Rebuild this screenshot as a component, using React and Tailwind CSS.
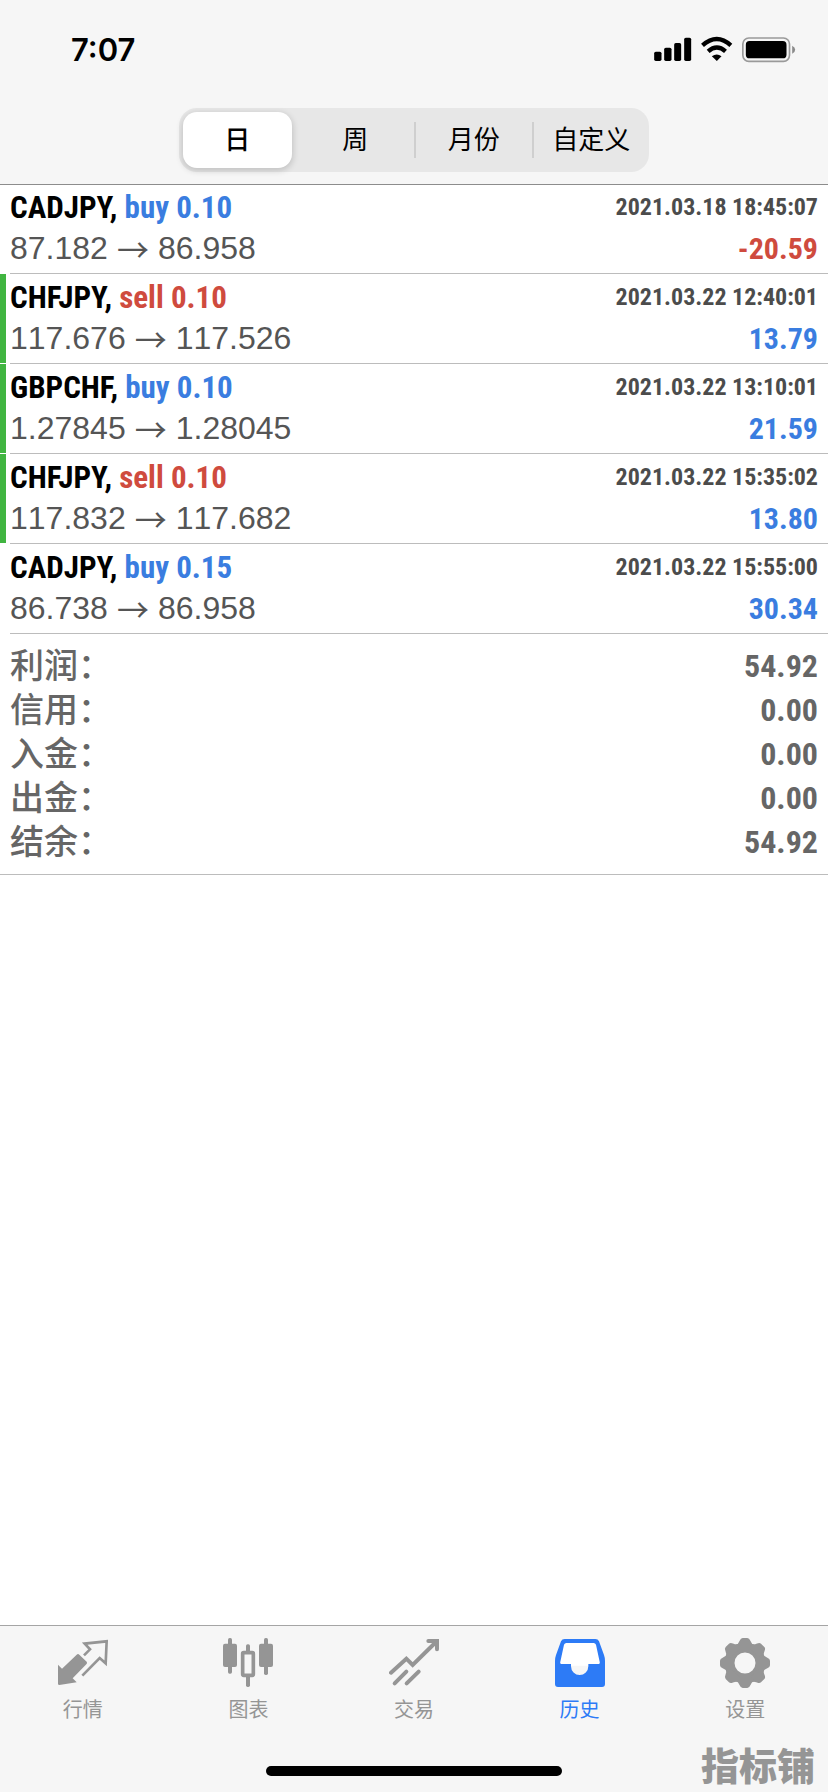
const narrow = "font-['Roboto_Condensed','Liberation_Sans_Narrow','Liberation_Sans','Noto_Sans_CJK_SC',sans-serif]";

const periods = ['日', '周', '月份', '自定义'];

const trades = [
  { symbol: 'CADJPY', side: 'buy', lots: '0.10', open: '87.182', close: '86.958', time: '2021.03.18 18:45:07', profit: '-20.59', marked: false },
  { symbol: 'CHFJPY', side: 'sell', lots: '0.10', open: '117.676', close: '117.526', time: '2021.03.22 12:40:01', profit: '13.79', marked: true },
  { symbol: 'GBPCHF', side: 'buy', lots: '0.10', open: '1.27845', close: '1.28045', time: '2021.03.22 13:10:01', profit: '21.59', marked: true },
  { symbol: 'CHFJPY', side: 'sell', lots: '0.10', open: '117.832', close: '117.682', time: '2021.03.22 15:35:02', profit: '13.80', marked: true },
  { symbol: 'CADJPY', side: 'buy', lots: '0.15', open: '86.738', close: '86.958', time: '2021.03.22 15:55:00', profit: '30.34', marked: false },
];

const totals = [
  ['利润', '54.92'],
  ['信用', '0.00'],
  ['入金', '0.00'],
  ['出金', '0.00'],
  ['结余', '54.92'],
];

function QuotesIcon() {
  return (
    <svg viewBox="171 87 150 150" className="size-[50px]" aria-hidden="true">
      <path fill="currentColor" d="M171 167 L183 179 L227 137 Q231 133 235 137 L257 158 Q260 162 256 166 L215 208 L227 220 L175 228 Q171 228 171 224 Z" />
      <path fill="none" stroke="currentColor" strokeWidth="8" d="M249 139 L267 121 L251 104 L317 97 L314 163 L296 147 L244 200" />
    </svg>
  );
}

function ChartIcon() {
  return (
    <svg viewBox="669 87 150 150" className="size-[50px]" aria-hidden="true" fill="currentColor">
      <rect x="684" y="87" width="12" height="107" rx="5" />
      <rect x="669" y="104" width="42" height="70" rx="6" />
      <rect x="792" y="87" width="12" height="111" rx="5" />
      <rect x="777" y="104" width="42" height="70" rx="6" />
      <rect x="738" y="106" width="12" height="26" rx="5" />
      <rect x="738" y="198" width="12" height="36" rx="5" />
      <rect x="728" y="131" width="32" height="68" rx="3" fill="none" stroke="currentColor" strokeWidth="11" />
    </svg>
  );
}

function TradeIcon() {
  return (
    <svg viewBox="264 87 150 150" className="size-[50px]" aria-hidden="true" fill="none" stroke="currentColor" strokeWidth="12" strokeLinecap="round">
      <path d="M270 191 L316 149 L335 168 L405 99" strokeLinejoin="miter" />
      <path d="M281 223 L316 188 M317 223 L353 188" />
      <path d="M382 96 H408 V121" />
    </svg>
  );
}

function HistoryIcon() {
  return (
    <svg viewBox="759 87 150 150" className="size-[50px]" aria-hidden="true">
      <path fill="#fff" d="M786 95 H882 L900 170 H768 Z" />
      <path fill="currentColor" fillRule="evenodd" d="M788 90 H880 Q888 90 891 97 L906 138 Q909 146 909 156 V225 Q909 234 900 234 H768 Q759 234 759 225 V156 Q759 146 762 138 L777 97 Q780 90 788 90 Z M793 102 Q788 102 786 107 L775 158 Q773 165 780 165 H807 V172 A26 26 0 0 0 859 172 V165 H888 Q895 165 893 158 L882 107 Q880 102 875 102 Z" />
    </svg>
  );
}

function SettingsIcon() {
  const teeth = [0, 45, 90, 135, 180, 225, 270, 315];
  return (
    <svg viewBox="-75 -75 150 150" className="size-[50px]" aria-hidden="true">
      <circle r="46" fill="none" stroke="currentColor" strokeWidth="29" />
      {teeth.map((angle) => (
        <path key={angle} transform={`rotate(${angle})`} fill="currentColor" d="M-27 -54 Q-20 -57 -16 -67 Q-13 -75 -7 -75 H7 Q13 -75 16 -67 Q20 -57 27 -54 L20 -42 H-20 Z" />
      ))}
    </svg>
  );
}

const tabs = [
  { label: '行情', Icon: QuotesIcon },
  { label: '图表', Icon: ChartIcon },
  { label: '交易', Icon: TradeIcon },
  { label: '历史', Icon: HistoryIcon, active: true },
  { label: '设置', Icon: SettingsIcon },
];

function StatusBar() {
  return (
    <div className="flex h-[100px] items-center justify-between pr-8 pl-[71px]">
      <span className="font-['Inter',sans-serif] text-[31px] leading-9 font-semibold">7:07</span>
      <svg viewBox="717 105 425 90" className="h-[30px] w-[142px]" role="img" aria-label="信号、无线网络、电池">
        <rect x="717" y="155" width="22" height="28" rx="5" />
        <rect x="747" y="143" width="22" height="40" rx="5" />
        <rect x="777" y="129" width="21" height="54" rx="5" />
        <rect x="807" y="113" width="21" height="70" rx="5" />
        <g fill="none" stroke="#000" strokeWidth="13">
          <path d="M862 136 Q905 98 947 136" />
          <path d="M879 154 Q905 131 931 154" />
        </g>
        <path d="M890 169 Q905 158 919 169 L905 183 Z" />
        <rect x="983" y="114" width="140" height="70" rx="18" fill="none" stroke="#9a9a9a" strokeWidth="5" />
        <rect x="992" y="123" width="122" height="52" rx="11" />
        <path d="M1131 137 Q1140 141 1140 149 T1131 161 Z" fill="#8a8a8a" />
      </svg>
    </div>
  );
}

function Periods() {
  return (
    <div className="mx-auto mt-2 mb-3 grid h-16 w-[470px] grid-cols-4 rounded-[18px] bg-[#e7e7e7]">
      {periods.map((name, i) => (
        <div key={name} className={i > 1 ? 'flex items-center before:h-9 before:w-0.5 before:bg-[#cfcfcf]' : 'flex items-center'}>
          <button
            type="button"
            aria-pressed={i === 0}
            className={
              i === 0
                ? 'mr-[5px] ml-1 h-14 flex-1 rounded-[14px] bg-white text-[26px] leading-8 font-medium shadow-[0_2px_6px_1px_rgba(0,0,0,0.16)]'
                : 'h-14 flex-1 text-[26px] leading-8'
            }
          >
            {name}
          </button>
        </div>
      ))}
    </div>
  );
}

function Trade({ symbol, side, lots, open, close, time, profit, marked }) {
  return (
    <li className="flex h-[90px]">
      <span className={marked ? 'mr-1 mb-px w-1.5 bg-[#41b541]' : 'mr-1 mb-px w-1.5'} />
      <div className="flex flex-1 flex-col justify-center border-b border-[#bcbcbc] pr-[10px] pb-0.5">
        <div className={`flex h-[41px] items-center justify-between font-bold ${narrow}`}>
          <span className="text-[31px] leading-[41px]">
            {symbol}, <span className={side === 'buy' ? 'text-[#3a7de0]' : 'text-[#cf4b3e]'}>{side} {lots}</span>
          </span>
          <span className="text-[24px] leading-[41px] text-[#4c4c4c]">{time}</span>
        </div>
        <div className="flex h-[41px] items-center justify-between">
          <span className="flex items-center gap-[9px] font-['Liberation_Sans',sans-serif] text-[32px] leading-[41px] text-[#555] [font-kerning:none]">
            {open}
            <span className="font-['Noto_Sans_CJK_SC',sans-serif]">→</span>
            {close}
          </span>
          <span className={`text-[30px] leading-[41px] font-bold ${narrow} ${profit.startsWith('-') ? 'text-[#cf4b3e]' : 'text-[#3a7de0]'}`}>{profit}</span>
        </div>
      </div>
    </li>
  );
}

export default function App() {
  return (
    <div className="relative flex min-h-screen flex-col bg-white font-['Liberation_Sans','Noto_Sans_CJK_SC',sans-serif] text-black">
      <header className="border-b border-[#8c8c8c] bg-[#f6f6f6]">
        <StatusBar />
        <Periods />
      </header>

      <main className="flex-1">
        <ul className="-mt-px">
          {trades.map((trade) => (
            <Trade key={trade.time} {...trade} />
          ))}
        </ul>
        <dl className="border-b border-[#bcbcbc] p-[10px] text-[#666]">
          {totals.map(([label, value]) => (
            <div key={label} className="flex h-11 items-center justify-between">
              <dt className="text-[34px] leading-[44px] font-medium">{label}：</dt>
              <dd className={`text-[32px] leading-[44px] font-bold ${narrow}`}>{value}</dd>
            </div>
          ))}
        </dl>
      </main>

      <footer className="border-t border-[#a5a5a5] bg-[#f6f6f6]">
        <nav className="grid grid-cols-5 pt-3">
          {tabs.map(({ label, Icon, active }) => (
            <a key={label} href="#" aria-current={active ? 'page' : undefined} className={active ? 'flex flex-col items-center gap-1.5 text-[#2d7bf6]' : 'flex flex-col items-center gap-1.5 text-[#959595]'}>
              <Icon />
              <span className="text-[20px] leading-8">{label}</span>
            </a>
          ))}
        </nav>
        <div className="mx-auto mt-10 mb-4 h-[10px] w-[296px] rounded-full bg-black" />
      </footer>

      <span className="absolute right-[13px] bottom-2 font-['Noto_Sans_CJK_SC',sans-serif] text-[38px] leading-10 font-black text-[#959595]">指标铺</span>
    </div>
  );
}
